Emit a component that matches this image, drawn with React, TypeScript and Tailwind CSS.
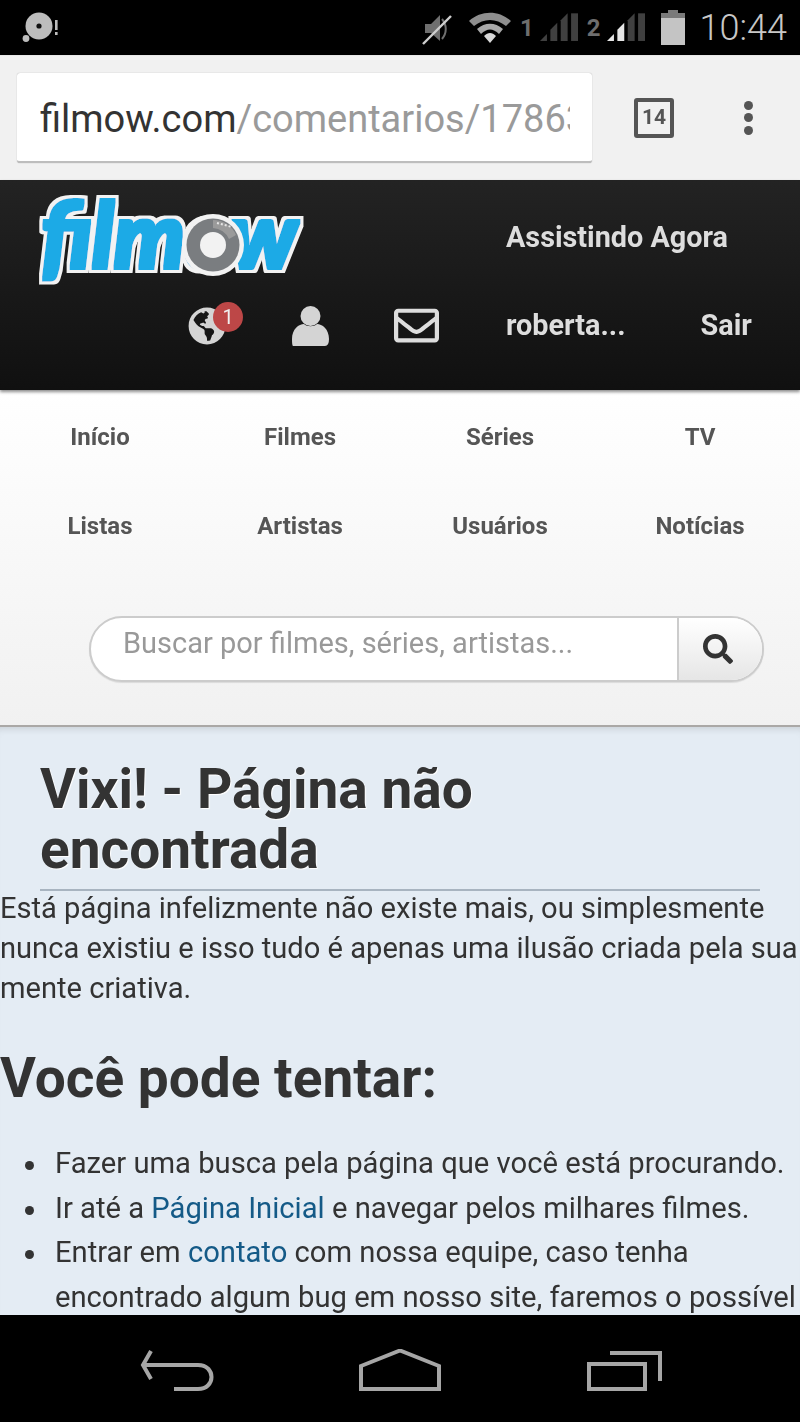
import React from "react";
import { FaGlobeAmericas, FaRegEnvelope, FaSearch } from "react-icons/fa";

function Signal({ level }: { level: number }) {
  const bars = ["M0 32 L8 24 V32 Z", "M12 32 V19 L20 11 V32 Z", "M24 32 V8 L32 0 V32 Z", "M36 32 V0 H44 V32 Z"];
  return (
    <svg width="38" height="36" viewBox="0 0 44 34" className="block">
      {bars.map((d, i) => (
        <path key={i} d={d} fill={i < level ? "#e6e6e6" : "#404040"} />
      ))}
    </svg>
  );
}

function StatusBar() {
  return (
    <div className="flex h-[55px] shrink-0 items-center justify-between bg-black pl-[22px] pr-[13px]">
      <div className="flex items-center">
        <svg width="38" height="32" viewBox="0 0 38 32">
          <circle cx="17" cy="14" r="13.5" fill="#bdbdbd" />
          <circle cx="17" cy="14" r="2.6" fill="#111" />
          <circle cx="4" cy="26.5" r="3.4" fill="#bdbdbd" />
          <rect x="33" y="8" width="2.6" height="10" fill="#bdbdbd" />
          <rect x="33" y="20" width="2.6" height="3" fill="#bdbdbd" />
        </svg>
      </div>
      <div className="flex items-center">
        <svg width="30" height="34" viewBox="0 0 30 34" className="mr-[16px]">
          <path d="M3 13 H9 L18 4 V30 L9 22 H3 Z" fill="#6f6f6f" />
          <path d="M20 8 C25 14 25 22 20 28" fill="none" stroke="#6f6f6f" strokeWidth="2" />
          <path d="M1 33 L29 5" stroke="#cfcfcf" strokeWidth="2.4" />
        </svg>
        <svg width="44" height="34" viewBox="0 0 44 34" className="mr-[8px]">
          <path d="M1 10 C13 -1 31 -1 43 10 L38 15 C28 7 16 7 6 15 Z" fill="#8e8e8e" />
          <path d="M9 18 C17 11 27 11 35 18 L31 23 C25 17 19 17 13 23 Z" fill="#a8a8a8" />
          <path d="M16 25 C20 21 24 21 28 25 L22 32 Z" fill="#d8d8d8" />
        </svg>
        <span className="mr-[6px] font-['Roboto',sans-serif] text-[24px] leading-none font-bold text-[#6e6e6e]">1</span>
        <Signal level={0} />
        <span className="mr-[6px] ml-[9px] font-['Roboto',sans-serif] text-[24px] leading-none font-bold text-[#6e6e6e]">2</span>
        <Signal level={2} />
        <svg width="24" height="36" viewBox="0 0 24 36" className="mr-[15px] ml-[16px]">
          <rect x="7" y="0" width="10" height="4" fill="#7a7a7a" />
          <rect x="0" y="3" width="24" height="5" fill="#7a7a7a" />
          <rect x="0" y="8" width="24" height="27" fill="#c4c4c4" />
        </svg>
        <span className="font-['Roboto',sans-serif] text-[36px] leading-none font-light text-[#c8c8c8]">10:44</span>
      </div>
    </div>
  );
}

function Toolbar() {
  return (
    <div className="flex h-[125px] shrink-0 items-center border-t border-[#e8e8e8] bg-[#f1f1f1] pb-[1px] pl-[17px]">
      <div className="flex h-[90px] w-[575px] items-center overflow-hidden rounded-[3px] border-b-2 border-[#bdbdbd] bg-white pt-[5px] pl-[23px] shadow-[0_0_1px_#999]">
        <span className="block w-[530px] overflow-hidden font-['Roboto',sans-serif] text-[38px] whitespace-nowrap text-[#9a9a9a]">
          <span className="text-[#333]">filmow.com</span>/comentarios/178634
        </span>
      </div>
      <div className="ml-[42px] flex h-[40px] w-[40px] items-center justify-center rounded-[3px] border-[4px] border-[#555] font-['Roboto',sans-serif] text-[21px] font-bold text-[#555]">
        14
      </div>
      <div className="ml-[70px] flex flex-col gap-[3.5px]">
        <span className="h-[9px] w-[9px] rounded-full bg-[#555]" />
        <span className="h-[9px] w-[9px] rounded-full bg-[#555]" />
        <span className="h-[9px] w-[9px] rounded-full bg-[#555]" />
      </div>
    </div>
  );
}

function Logo() {
  return (
    <svg width="280" height="104" viewBox="0 0 280 104" className="block">
      <defs>
        <filter id="logo-outline" x="-10%" y="-20%" width="120%" height="140%">
          <feMorphology in="SourceAlpha" operator="dilate" radius="5" result="wide" />
          <feFlood floodColor="#f2f2f2" />
          <feComposite in2="wide" operator="in" result="white" />
          <feMorphology in="SourceGraphic" operator="dilate" radius="1.6" result="blue" />
          <feMerge>
            <feMergeNode in="white" />
            <feMergeNode in="blue" />
          </feMerge>
        </filter>
      </defs>
      <text
        x="8"
        y="79"
        fontFamily="Lato, sans-serif"
        fontWeight="900"
        fontStyle="italic"
        fontSize="92"
        textLength="256"
        lengthAdjust="spacingAndGlyphs"
        fill="#1aaae6"
        filter="url(#logo-outline)"
      >
        filmow
      </text>
      <circle cx="180" cy="56" r="31" fill="#f2f2f2" />
      <circle cx="180" cy="56" r="26.5" fill="#7a7d80" />
      <path d="M180 31 A25 25 0 0 1 203 46 L196 50 A18 18 0 0 0 180 39 Z" fill="#9a9a9a" />
      <path d="M184 34 L199 38" stroke="#e6e6e6" strokeWidth="2" strokeDasharray="2 2" />
      <circle cx="180" cy="56" r="13" fill="#f2f2f2" />
    </svg>
  );
}

function Header() {
  const txt = "font-['Roboto',sans-serif] text-[28.8px] leading-none font-bold text-[#dddddd]";
  return (
    <div className="relative z-10 flex h-[210px] shrink-0 flex-col bg-gradient-to-b from-[#232323] to-[#101010] shadow-[0_2px_3px_rgba(0,0,0,0.45)]">
      <div className="flex h-[123px] items-start">
        <div className="ml-[33px] pt-[9px]">
          <Logo />
        </div>
        <span className={`${txt} ml-[193px] pt-[43px]`}>Assistindo Agora</span>
      </div>
      <div className="flex items-center">
        <div className="relative ml-[188px] h-[38px] w-[38px] text-[#d4d4d4]">
          <FaGlobeAmericas size={38} />
          <span className="absolute -top-[5px] left-[25px] flex h-[30px] w-[30px] items-center justify-center rounded-full bg-[#bd4747] font-['Roboto',sans-serif] text-[20px] leading-none text-[#f0f0f0]">
            1
          </span>
        </div>
        <svg width="37" height="40" viewBox="0 0 37 40" className="ml-[66px]" fill="#d4d4d4">
          <circle cx="18.5" cy="10" r="10" />
          <path d="M1 40 Q0 40 0 33 C0 23 7 18 12 18 C15 21 22 21 25 18 C30 18 37 23 37 33 Q37 40 33 40 Z" />
        </svg>
        <FaRegEnvelope size={45} className="ml-[65px] text-[#dddddd]" />
        <span className={`${txt} ml-[67px]`}>roberta...</span>
        <span className={`${txt} ml-[75px]`}>Sair</span>
      </div>
    </div>
  );
}

function Nav() {
  const items = ["Início", "Filmes", "Séries", "TV", "Listas", "Artistas", "Usuários", "Notícias"];
  return (
    <div className="h-[337px] shrink-0 border-b-2 border-[#aaa8a6] bg-gradient-to-b from-white to-[#f1f1f1] pt-[2px]">
      <div className="grid grid-cols-4">
        {items.map((t) => (
          <div
            key={t}
            className="flex h-[89px] items-center justify-center font-['Roboto',sans-serif] text-[24px] font-bold text-[#555555]"
          >
            {t}
          </div>
        ))}
      </div>
      <div className="mt-[46px] ml-[89px] flex h-[66px] w-[675px] overflow-hidden rounded-[33px] border-2 border-[#cccccc] bg-white shadow-[0_1px_1px_rgba(0,0,0,0.1)]">
        <div className="flex flex-1 items-center pb-[10px] pl-[32px] font-['Roboto',sans-serif] text-[29px] text-[#999999]">
          Buscar por filmes, séries, artistas...
        </div>
        <div className="flex w-[85px] items-center justify-center border-l-2 border-[#cccccc] bg-gradient-to-b from-white to-[#e6e6e6] pr-[5px] text-[#333333]">
          <FaSearch size={30} />
        </div>
      </div>
    </div>
  );
}

function Bullet({ children }: { children: React.ReactNode }) {
  return (
    <li className="flex">
      <span className="mt-[20px] mr-[21px] ml-[25px] h-[9px] w-[9px] shrink-0 rounded-full bg-[#333333]" />
      <div>{children}</div>
    </li>
  );
}

function Main() {
  const link = "text-[#145a87]";
  return (
    <div className="min-h-0 flex-1 overflow-hidden bg-[#e4ecf4] font-['Roboto',sans-serif] text-[#333333] shadow-[inset_0_7px_7px_-5px_rgba(0,0,0,0.12)]">
      <h1 className="mx-[40px] mt-[32px] border-b-2 border-[#a8b4c0] pb-[10px] text-[55px] leading-[60px] font-bold [text-shadow:1px_1px_1px_#fff]">
        Vixi! - Página não encontrada
      </h1>
      <p className="mt-[-3px] text-[29.1px] leading-[40px]">
        Está página infelizmente não existe mais, ou simplesmente nunca existiu e isso tudo é apenas uma ilusão criada pela sua mente criativa.
      </p>
      <h2 className="mt-[40px] text-[55px] leading-[60px] font-bold">Você pode tentar:</h2>
      <ul className="mt-[33px] text-[29.2px] leading-[44.5px]">
        <Bullet>Fazer uma busca pela página que você está procurando.</Bullet>
        <Bullet>
          Ir até a <span className={link}>Página Inicial</span> e navegar pelos milhares filmes.
        </Bullet>
        <Bullet>
          Entrar em <span className={link}>contato</span> com nossa equipe, caso tenha encontrado algum bug em nosso site, faremos o possível
        </Bullet>
      </ul>
    </div>
  );
}

function BottomBar() {
  return (
    <div className="flex h-[107px] shrink-0 items-start justify-center bg-black pt-[34px]">
      <svg width="524" height="44" viewBox="0 0 524 44" fill="none" stroke="#a6a6a6" strokeWidth="4">
        <path d="M13 2 L5 16 L13 30" />
        <path d="M6 16 H60 C78 16 78 40 60 40 H36" />
        <path d="M223 16 L262 0.5 L301 16 V39 H223 Z" transform="translate(0 1)" />
        <path d="M451 15 H507 V40 H451 Z" />
        <path d="M472 4 H522 V32" />
      </svg>
    </div>
  );
}

export default function App() {
  return (
    <div className="flex h-[1422px] w-[800px] flex-col overflow-hidden blur-[0.5px]">
      <StatusBar />
      <Toolbar />
      <Header />
      <Nav />
      <Main />
      <BottomBar />
    </div>
  );
}
